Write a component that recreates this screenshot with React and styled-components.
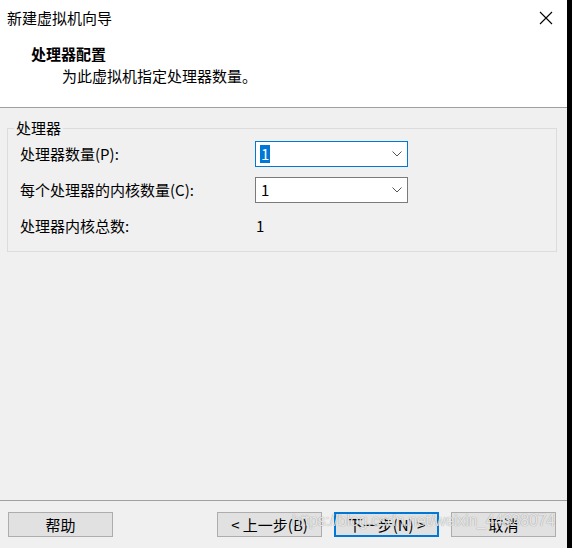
import React from "react";
import styled, { createGlobalStyle } from "styled-components";

const Global = createGlobalStyle`
  html, body { margin: 0; padding: 0; background: #000; }
  body { font-family: "Noto Sans CJK SC", "Noto Sans", sans-serif; font-size: 15px; color: #000; }
  * { box-sizing: border-box; }
`;

const Screen = styled.div`
  display: flex;
  width: 572px;
  height: 548px;
  background: #000;
  overflow: hidden;
`;

const Dialog = styled.div`
  position: relative;
  width: 567px;
  height: 548px;
  display: flex;
  flex-direction: column;
  background: #f0f0f0;
`;

const Header = styled.div`
  background: #fff;
  height: 108px;
  border-bottom: 1px solid #a0a0a0;
  display: flex;
  flex-direction: column;
`;

const TitleBar = styled.div`
  height: 36px;
  display: flex;
  align-items: center;
  justify-content: space-between;
  padding: 0 14px 0 7px;
`;

const Title = styled.div`
  font-size: 15px;
  line-height: 20px;
  margin-top: -1px;
`;

const Close = styled.div`
  width: 14px;
  height: 14px;
  display: flex;
  margin-top: -1px;
`;

const HeadText = styled.div`
  padding-left: 31px;
  display: flex;
  flex-direction: column;
`;

const HeadTitle = styled.div`
  font-weight: bold;
  font-size: 15px;
  line-height: 20px;
  margin-top: 8px;
`;

const HeadSub = styled.div`
  font-size: 15px;
  line-height: 20px;
  padding-left: 31px;
  margin-top: 2px;
`;

const Body = styled.div`
  flex: 1;
  padding: 11px 0 0 7px;
`;

const Group = styled.fieldset`
  margin: 0;
  width: 550px;
  height: 133px;
  border: 1px solid #dcdcdc;
  padding: 4px 0 0 12px;
`;

const Legend = styled.legend`
  padding: 0 2px;
  margin-left: -6px;
  font-size: 15px;
  line-height: 18px;
`;

const Rows = styled.div`
  display: grid;
  grid-template-columns: 235px 153px;
  grid-auto-rows: 26px;
  row-gap: 10px;
  align-items: center;
`;

const Label = styled.div`
  font-size: 15px;
  line-height: 20px;
`;

const Combo = styled.div`
  height: 26px;
  background: #fff;
  border: 1px solid ${(p) => (p.$focused ? "#0078d7" : "#7a7a7a")};
  display: flex;
  align-items: center;
  justify-content: space-between;
  padding: 0 5px 0 4px;
`;

const Value = styled.span`
  font-size: 15px;
  line-height: 18px;
  padding: 0 1px;
  background: ${(p) => (p.$selected ? "#0078d7" : "transparent")};
  color: ${(p) => (p.$selected ? "#fff" : "#000")};
`;

const StaticValue = styled.div`
  font-size: 15px;
  line-height: 20px;
  padding-left: 1px;
`;

const Footer = styled.div`
  height: 48px;
  border-top: 1px solid #a0a0a0;
  display: flex;
  align-items: flex-start;
  padding: 11px 11px 0 8px;
  gap: 12px;
`;

const Spacer = styled.div`
  flex: 1;
`;

const Button = styled.button`
  width: 105px;
  height: 25px;
  margin: 0;
  padding: 0;
  background: #e1e1e1;
  border: 1px solid ${(p) => (p.$default ? "#0078d7" : "#adadad")};
  box-shadow: ${(p) => (p.$default ? "inset 0 0 0 1px #0078d7" : "none")};
  font-family: "Noto Sans CJK SC", "Noto Sans", sans-serif;
  font-size: 15px;
  line-height: 20px;
  color: #000;
`;

const Watermark = styled.div`
  position: absolute;
  left: 292px;
  top: 512px;
  font-family: "Liberation Sans", Arial, sans-serif;
  font-size: 16px;
  letter-spacing: -0.25px;
  color: rgba(255, 255, 255, 0.8);
  text-shadow: 0 0 1px rgba(0, 0, 0, 0.45);
  pointer-events: none;
  white-space: nowrap;
`;

const Chevron = () => (
  <svg width="10" height="6" viewBox="0 0 10 6">
    <path d="M0.5 0.5 L5 5 L9.5 0.5" fill="none" stroke="#555" strokeWidth="1" />
  </svg>
);

export default function App() {
  return (
    <>
      <Global />
      <Screen>
        <Dialog>
          <Header>
            <TitleBar>
              <Title>新建虚拟机向导</Title>
              <Close>
                <svg width="14" height="14" viewBox="0 0 14 14">
                  <path d="M1 1 L13 13 M13 1 L1 13" stroke="#000" strokeWidth="1.1" />
                </svg>
              </Close>
            </TitleBar>
            <HeadText>
              <HeadTitle>处理器配置</HeadTitle>
              <HeadSub>为此虚拟机指定处理器数量。</HeadSub>
            </HeadText>
          </Header>
          <Body>
            <Group>
              <Legend>处理器</Legend>
              <Rows>
                <Label>处理器数量(P):</Label>
                <Combo $focused>
                  <Value $selected>1</Value>
                  <Chevron />
                </Combo>
                <Label>每个处理器的内核数量(C):</Label>
                <Combo>
                  <Value>1</Value>
                  <Chevron />
                </Combo>
                <Label>处理器内核总数:</Label>
                <StaticValue>1</StaticValue>
              </Rows>
            </Group>
          </Body>
          <Footer>
            <Button>帮助</Button>
            <Spacer />
            <Button>&lt; 上一步(B)</Button>
            <Button $default>下一步(N) &gt;</Button>
            <Button>取消</Button>
          </Footer>
          <Watermark>https://blog.csdn.net/weixin_44338074</Watermark>
        </Dialog>
      </Screen>
    </>
  );
}
